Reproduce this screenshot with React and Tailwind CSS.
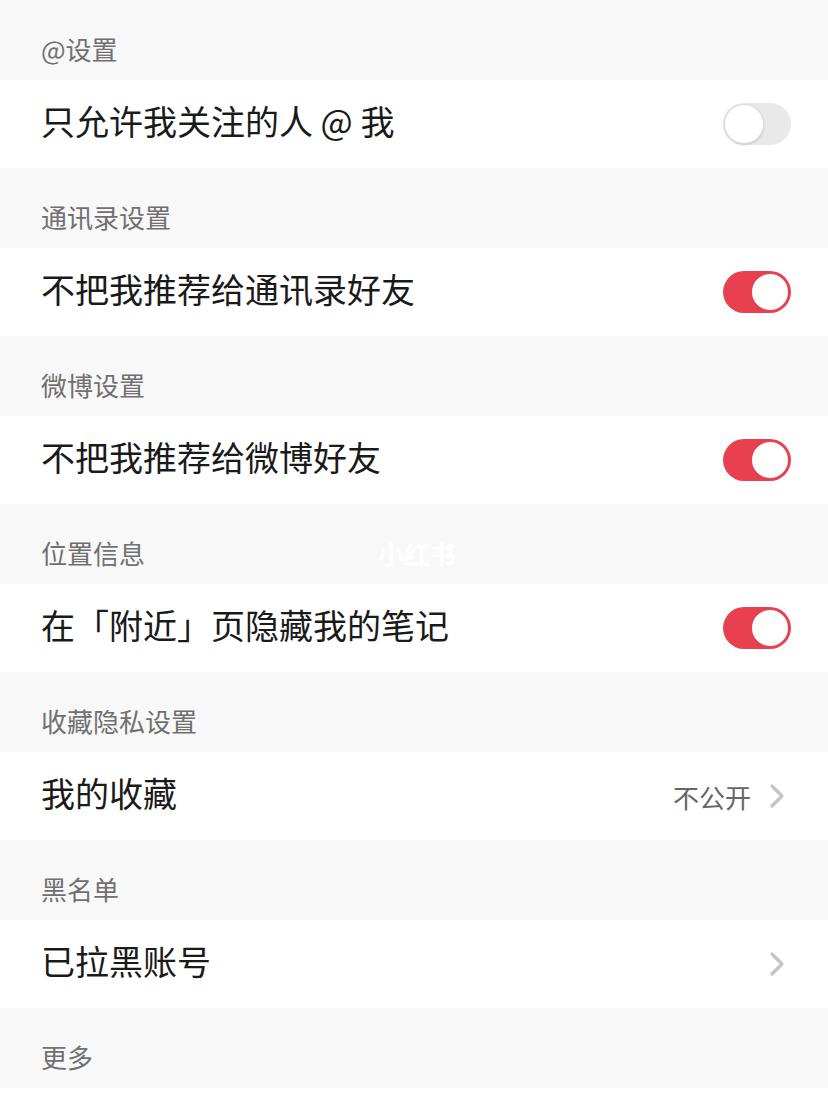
import React from 'react'

const font = { fontFamily: '"Noto Sans CJK SC", "Noto Sans", sans-serif' }

const sections = [
  { title: '@设置', label: '只允许我关注的人 @ 我', type: 'toggle', on: false },
  { title: '通讯录设置', label: '不把我推荐给通讯录好友', type: 'toggle', on: true },
  { title: '微博设置', label: '不把我推荐给微博好友', type: 'toggle', on: true },
  { title: '位置信息', label: '在「附近」页隐藏我的笔记', type: 'toggle', on: true, watermark: true },
  { title: '收藏隐私设置', label: '我的收藏', type: 'link', value: '不公开' },
  { title: '黑名单', label: '已拉黑账号', type: 'link' },
  { title: '更多' },
]

function Toggle({ on }) {
  if (on) {
    return (
      <div className="w-[68px] h-[42px] rounded-full bg-[#e8404f] flex items-center justify-end pr-[1px]">
        <div className="w-[40px] h-[40px] rounded-full bg-white border-2 border-[#e8404f]" />
      </div>
    )
  }
  return (
    <div className="w-[68px] h-[42px] rounded-full bg-[#e9e9ea] flex items-center pl-[1px]">
      <div className="w-[40px] h-[40px] rounded-full bg-white border border-[#dcdcdc] shadow-sm" />
    </div>
  )
}

function Chevron() {
  return (
    <svg width="16" height="26" viewBox="0 0 16 26" fill="none">
      <path d="M3 3l10 10L3 23" stroke="#c4c4c4" strokeWidth="3.2" strokeLinecap="round" strokeLinejoin="round" />
    </svg>
  )
}

export default function App() {
  return (
    <div className="w-[828px] h-[1104px] overflow-hidden bg-[#f8f8f8]" style={font}>
      {sections.map((s) => (
        <div key={s.title}>
          <div className="relative h-[80px] flex items-end pb-[12px] px-[41px]">
            <span className="text-[26px] leading-[38px] text-[#707070]">{s.title}</span>
            {s.watermark && (
              <span className="absolute left-[378px] top-[30px] text-[26px] font-bold text-white">小红书</span>
            )}
          </div>
          {s.label && (
            <div className="h-[88px] bg-white flex items-center justify-between pl-[41px] pr-[37px]">
              <span className="text-[34px] leading-[44px] text-[#1a1a1a] pb-[6px]">{s.label}</span>
              {s.type === 'toggle' ? (
                <Toggle on={s.on} />
              ) : (
                <div className="flex items-center gap-[18px] pr-[6px]">
                  {s.value && <span className="text-[26px] text-[#666]">{s.value}</span>}
                  <Chevron />
                </div>
              )}
            </div>
          )}
        </div>
      ))}
      <div className="h-[88px] bg-white" />
    </div>
  )
}
